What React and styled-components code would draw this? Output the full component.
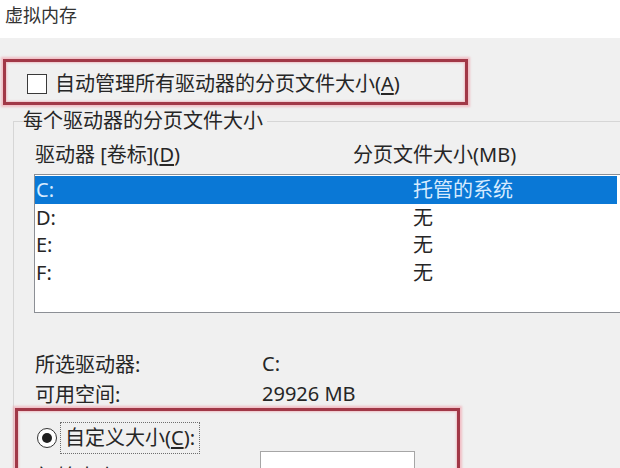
import React from 'react';
import styled, { createGlobalStyle } from 'styled-components';

const drives = [
    { name: 'C:', size: '托管的系统', selected: true },
    { name: 'D:', size: '无' },
    { name: 'E:', size: '无' },
    { name: 'F:', size: '无' },
];

const GlobalStyle = createGlobalStyle`
    html, body {
        margin: 0;
        padding: 0;
        background: #f0f0f0;
        overflow: hidden;
    }
    body {
        font-family: "Noto Sans", "Noto Sans CJK SC", sans-serif;
        color: #262626;
    }
`

const App = () => {
    return (
        <Page>
            <GlobalStyle />
            <TitleBar>虚拟内存</TitleBar>

            <Marked $width={465} $left={3} $top={21}>
                <CheckRow>
                    <CheckBox />
                    <span>自动管理所有驱动器的分页文件大小(<u>A</u>)</span>
                </CheckRow>
            </Marked>

            <Group>
                <Legend>每个驱动器的分页文件大小</Legend>
                <ColumnHead>
                    <span>驱动器 [卷标](<u>D</u>)</span>
                    <span>分页文件大小(MB)</span>
                </ColumnHead>
                <DriveList>
                    {
                        drives.map((item) => (
                            <DriveRow key={item.name} $selected={item.selected}>
                                <span>{item.name}</span>
                                <span>{item.size}</span>
                            </DriveRow>
                        ))
                    }
                </DriveList>

                <InfoGrid>
                    <span>所选驱动器:</span>
                    <span>C:</span>
                    <span>可用空间:</span>
                    <span>29926 MB</span>
                </InfoGrid>

                <Marked $width={445} $left={1} $top={0}>
                    <RadioRow>
                        <Radio />
                        <FocusLabel>自定义大小(<u>C</u>):</FocusLabel>
                    </RadioRow>
                    <SizeRow>
                        <span>初始大小(MB)(<u>I</u>):</span>
                        <SizeInput type="text" />
                    </SizeRow>
                </Marked>
            </Group>
        </Page>
    );
}

const Page = styled.div`
    width: 620px;
    height: 468px;
    overflow: hidden;
    font-size: 20px;
`

const TitleBar = styled.div`
    height: 38px;
    box-sizing: border-box;
    background: #ffffff;
    padding: 4px 0 0 5px;
    font-size: 18px;
    line-height: 22px;
    color: #333;
`

const Marked = styled.div`
    box-sizing: border-box;
    width: ${p => p.$width}px;
    margin: ${p => p.$top}px 0 0 ${p => p.$left}px;
    border: 3px solid #a13847;
    box-shadow: 0 0 2px 2px rgba(240, 150, 162, 0.55), inset 0 0 2px 1px rgba(240, 150, 162, 0.5);
    position: relative;
    z-index: 1;
`

const CheckRow = styled.label`
    display: flex;
    align-items: center;
    gap: 8px;
    height: 36px;
    padding: 4px 0 0 21px;
    line-height: 24px;
    u { text-underline-offset: 2px; }
`

const CheckBox = styled.span`
    width: 20px;
    height: 20px;
    box-sizing: border-box;
    border: 1.5px solid #3a3a3a;
    background: #ffffff;
`

const Group = styled.fieldset`
    margin: 4px 0 0 13px;
    padding: 0;
    width: 660px;
    border: 1px solid #d6d6d6;
    border-bottom: none;
    min-width: 0;
`

const Legend = styled.legend`
    margin-left: 9px;
    padding: 0 4px 0 0;
    line-height: 24px;
`

const ColumnHead = styled.div`
    display: grid;
    grid-template-columns: 318px 1fr;
    margin-top: 10px;
    padding-left: 21px;
    line-height: 24px;
    u { text-underline-offset: 2px; }
`

const DriveList = styled.div`
    box-sizing: border-box;
    margin: 7px 0 0 20px;
    width: 600px;
    height: 139px;
    padding-top: 1px;
    background: #ffffff;
    border: 1px solid #8c8f95;
`

const DriveRow = styled.div`
    display: grid;
    grid-template-columns: 377px 1fr;
    height: 27.5px;
    line-height: 27.5px;
    padding-left: 1px;
    margin-right: 16px;
    background: ${p => p.$selected ? '#0a78d6' : 'transparent'};
    color: ${p => p.$selected ? '#d6ebff' : '#262626'};
`

const InfoGrid = styled.div`
    display: grid;
    grid-template-columns: 227px 1fr;
    grid-auto-rows: 30px;
    align-items: center;
    margin: 35px 0 0 21px;
`

const RadioRow = styled.div`
    display: flex;
    align-items: center;
    gap: 6px;
    padding: 14px 0 0 19px;
    height: 26px;
`

const Radio = styled.span`
    width: 20px;
    height: 20px;
    box-sizing: border-box;
    border-radius: 50%;
    border: 1.5px solid #333;
    background: #ffffff;
    display: flex;
    align-items: center;
    justify-content: center;
    &::after {
        content: '';
        width: 10px;
        height: 10px;
        border-radius: 50%;
        background: #1f1f1f;
    }
`

const FocusLabel = styled.span`
    line-height: 26px;
    padding: 0 2px;
    outline: 1px dotted #6e6e6e;
    outline-offset: 2px;
    u { text-underline-offset: 2px; }
`

const SizeRow = styled.div`
    display: grid;
    grid-template-columns: 223px 155px;
    align-items: start;
    padding-left: 19px;
    height: 40px;
    span {
        padding-top: 14px;
        line-height: 24px;
    }
`

const SizeInput = styled.input`
    box-sizing: border-box;
    height: 30px;
    width: 155px;
    margin: 0;
    border: 1px solid #a6a6a6;
    background: #ffffff;
`

export default App;
